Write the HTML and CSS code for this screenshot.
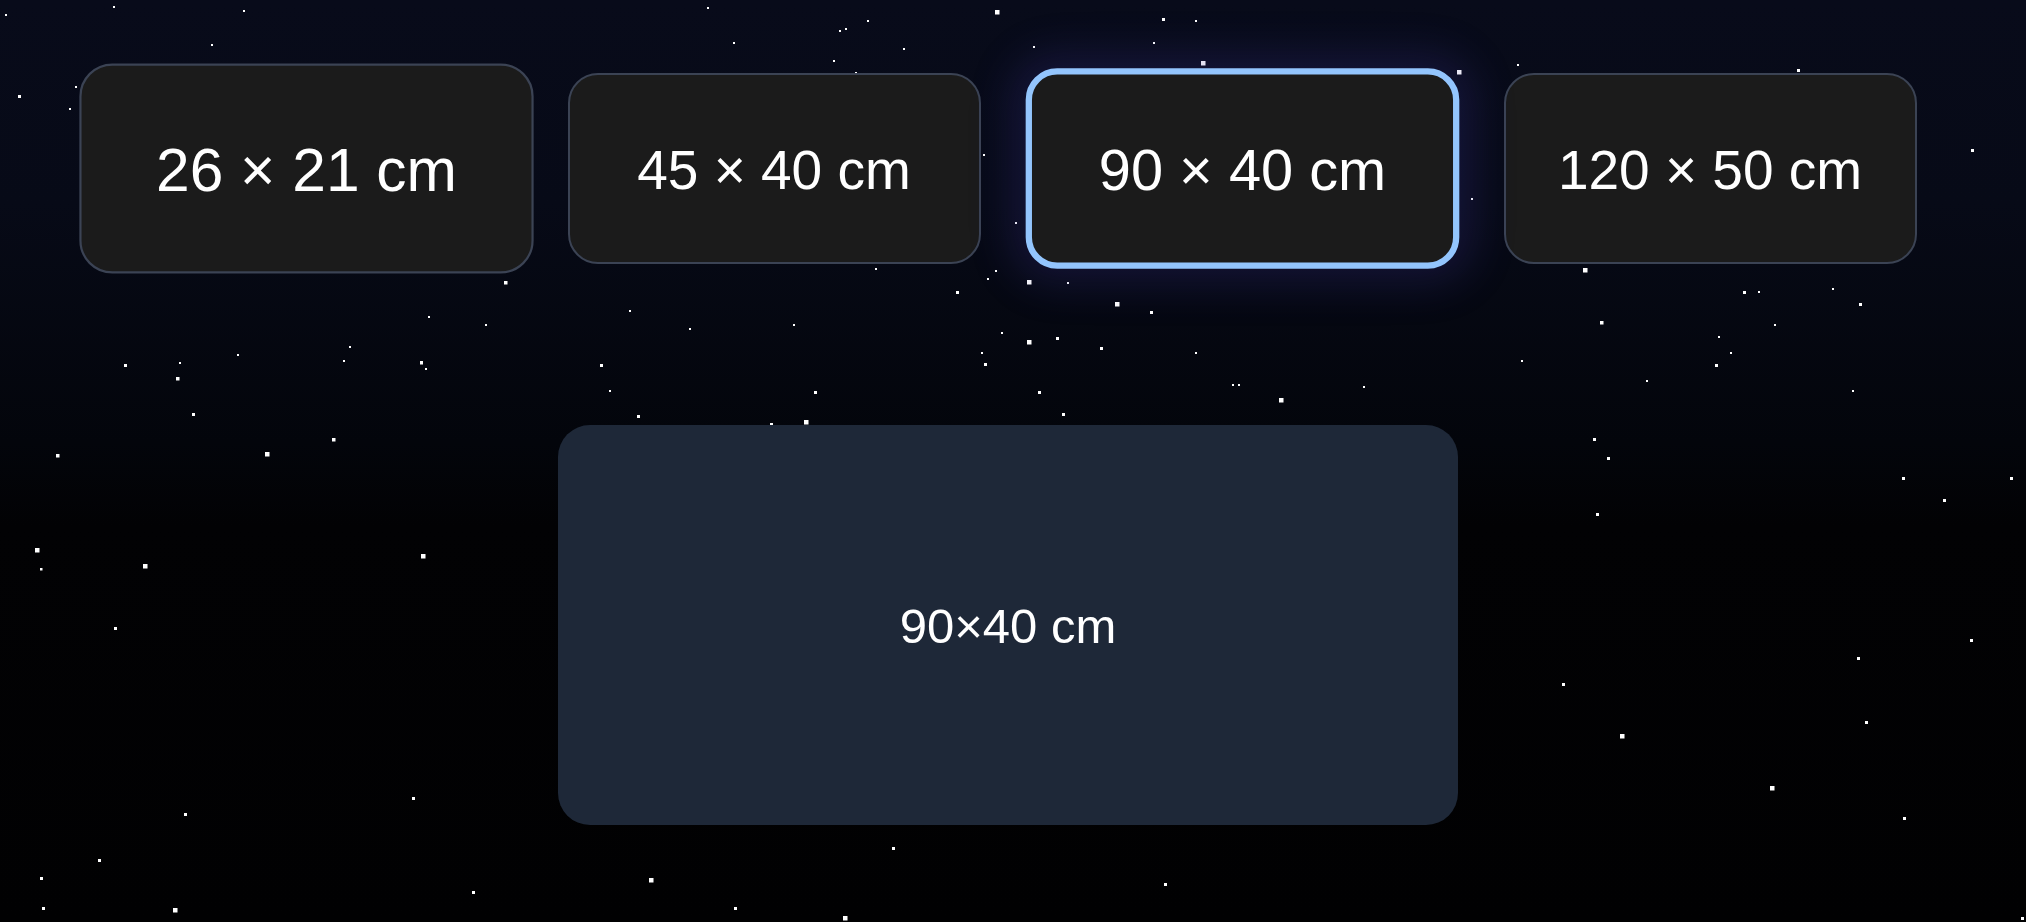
FILE: index.html
```html
<!DOCTYPE html>
<html lang="en">
<head>
<meta charset="utf-8">
<title>Size picker</title>
<link rel="stylesheet" href="styles.css">
</head>
<body>
<svg class="sky" width="2026" height="922" viewBox="0 0 2026 922" aria-hidden="true">
  <g fill="#ffffff">
    <rect x="5" y="14" width="2" height="2"/><rect x="113" y="6" width="2" height="2"/><rect x="243" y="10" width="2" height="2"/>
    <rect x="211" y="44" width="2" height="2"/><rect x="18" y="95" width="3" height="3"/><rect x="75" y="86" width="2" height="2"/>
    <rect x="69" y="108" width="2" height="2"/><rect x="504" y="281" width="3.5" height="3.5"/><rect x="428" y="316" width="2" height="2"/>
    <rect x="485" y="324" width="2" height="2"/><rect x="629" y="310" width="2" height="2"/><rect x="124" y="364" width="3" height="3"/>
    <rect x="179" y="362" width="2" height="2"/><rect x="176" y="377" width="3.5" height="3.5"/><rect x="237" y="354" width="2" height="2"/>
    <rect x="349" y="346" width="2" height="2"/><rect x="343" y="360" width="2" height="2"/><rect x="420" y="361" width="3" height="3.5"/>
    <rect x="425" y="368" width="2" height="2"/><rect x="600" y="364" width="3" height="3"/><rect x="609" y="390" width="2" height="2"/>
    <rect x="637" y="415" width="3" height="3"/><rect x="192" y="413" width="3" height="3"/><rect x="332" y="438" width="3.5" height="3.5"/>
    <rect x="56" y="454" width="3.5" height="3.5"/><rect x="265" y="452" width="4.5" height="4.5"/>

    <rect x="707" y="7" width="2" height="2"/><rect x="995" y="10" width="4.5" height="4.5"/><rect x="867" y="20" width="2" height="2"/>
    <rect x="839" y="30" width="2" height="2"/><rect x="845" y="28" width="2" height="2"/><rect x="733" y="42" width="2" height="2"/>
    <rect x="903" y="48" width="2" height="2"/><rect x="833" y="60" width="2" height="2"/><rect x="855" y="72" width="2" height="2"/>
    <rect x="1033" y="46" width="2" height="2"/><rect x="1162" y="18" width="3" height="3"/><rect x="1195" y="20" width="2" height="2"/>
    <rect x="1153" y="42" width="2" height="2"/><rect x="1201" y="61" width="4.5" height="4.5"/><rect x="983" y="154" width="2" height="2"/>
    <rect x="1015" y="222" width="2" height="2"/><rect x="875" y="268" width="2" height="2"/><rect x="995" y="270" width="2" height="2"/>
    <rect x="987" y="278" width="2" height="2"/><rect x="956" y="291" width="3" height="3"/><rect x="1027" y="280" width="4.5" height="4.5"/>
    <rect x="1067" y="282" width="2" height="2"/><rect x="1115" y="302" width="4.5" height="4.5"/><rect x="1150" y="311" width="3" height="3"/>
    <rect x="689" y="328" width="2" height="2"/><rect x="793" y="324" width="2" height="2"/><rect x="1001" y="332" width="2" height="2"/>
    <rect x="1027" y="340" width="4.5" height="4.5"/><rect x="1056" y="337" width="3" height="3"/><rect x="1100" y="347" width="3" height="3"/>
    <rect x="1195" y="352" width="2" height="2"/><rect x="981" y="352" width="2" height="2"/><rect x="984" y="363" width="3" height="3"/>
    <rect x="1232" y="384" width="2" height="2"/><rect x="1238" y="384" width="2" height="2"/><rect x="1279" y="398" width="4.5" height="4.5"/>
    <rect x="814" y="391" width="3" height="3"/><rect x="1038" y="391" width="3" height="3"/><rect x="1062" y="413" width="3" height="3"/>
    <rect x="770" y="423" width="3" height="3"/><rect x="804" y="420" width="4.5" height="4.5"/>

    <rect x="1457" y="70" width="4.5" height="4.5"/><rect x="1517" y="64" width="2" height="2"/><rect x="1797" y="69" width="3" height="3"/>
    <rect x="1971" y="149" width="3" height="3"/><rect x="1471" y="198" width="2" height="2"/><rect x="1583" y="268" width="4.5" height="4.5"/>
    <rect x="1743" y="291" width="3" height="3"/><rect x="1758" y="291" width="2" height="2"/><rect x="1832" y="288" width="2" height="2"/>
    <rect x="1859" y="303" width="3" height="3"/><rect x="1600" y="321" width="3.5" height="3.5"/><rect x="1774" y="324" width="2" height="2"/>
    <rect x="1718" y="336" width="2" height="2"/><rect x="1730" y="352" width="2" height="2"/><rect x="1715" y="364" width="3" height="3"/>
    <rect x="1521" y="360" width="2" height="2"/><rect x="1646" y="380" width="2" height="2"/><rect x="1363" y="386" width="2" height="2"/>
    <rect x="1852" y="390" width="2" height="2"/><rect x="1593" y="438" width="3" height="3"/><rect x="1607" y="457" width="3" height="3"/>

    <rect x="35" y="548" width="4.5" height="4.5"/><rect x="40" y="568" width="2.5" height="2.5"/><rect x="143" y="564" width="4.5" height="4.5"/>
    <rect x="114" y="627" width="3" height="3"/><rect x="421" y="554" width="4.5" height="4.5"/><rect x="184" y="813" width="3" height="3"/>
    <rect x="412" y="797" width="3" height="3"/><rect x="98" y="859" width="3" height="3"/><rect x="40" y="877" width="3" height="3"/>
    <rect x="42" y="907" width="3" height="3"/><rect x="173" y="908" width="4.5" height="4.5"/><rect x="472" y="891" width="3" height="3"/>
    <rect x="649" y="878" width="4.5" height="4.5"/>

    <rect x="892" y="847" width="3" height="3"/><rect x="1164" y="883" width="3" height="3"/><rect x="734" y="907" width="3" height="3"/>
    <rect x="843" y="916" width="4.5" height="4.5"/>

    <rect x="1902" y="477" width="3" height="3"/><rect x="2010" y="477" width="3" height="3"/><rect x="1943" y="499" width="3" height="3"/>
    <rect x="1596" y="513" width="3" height="3"/><rect x="1970" y="639" width="3" height="3"/><rect x="1857" y="657" width="3" height="3"/>
    <rect x="1562" y="683" width="3" height="3"/><rect x="1865" y="721" width="3" height="3"/><rect x="1620" y="734" width="4.5" height="4.5"/>
    <rect x="1770" y="786" width="4.5" height="4.5"/><rect x="1903" y="817" width="3" height="3"/><rect x="2021" y="917" width="3" height="3"/>
  </g>
</svg>

<main class="stage">
  <div class="options">
    <button class="option is-hover" type="button">26 × 21 cm</button>
    <button class="option" type="button">45 × 40 cm</button>
    <button class="option is-selected" type="button">90 × 40 cm</button>
    <button class="option" type="button">120 × 50 cm</button>
  </div>
  <div class="preview">90×40 cm</div>
</main>
</body>
</html>
```

FILE: styles.css
```css
* {
  box-sizing: border-box;
}

html,
body {
  margin: 0;
  height: 100%;
}

body {
  position: relative;
  overflow: hidden;
  font-family: "Liberation Sans", Arial, sans-serif;
  color: #ffffff;
  background: linear-gradient(to bottom, #080b1a 0%, #070a17 22%, #03050b 48%, #020204 57%, #010102 100%);
}

.sky {
  position: absolute;
  left: 0;
  top: 0;
  z-index: 0;
}

.stage {
  position: relative;
  z-index: 1;
  display: flex;
  flex-direction: column;
  align-items: center;
  padding: 73px 10px 0 0;
}

.options {
  display: flex;
  gap: 55px;
}

.option {
  width: 413px;
  height: 191px;
  display: flex;
  align-items: center;
  justify-content: center;
  background: #1b1b1b;
  border: 2.5px solid #3b4354;
  border-radius: 30px;
  color: #ffffff;
  font-family: "Liberation Sans", Arial, sans-serif;
  font-size: 55px;
  font-weight: 400;
  padding: 3px 0 0;
  cursor: pointer;
}

.option.is-hover {
  transform: scale(1.1);
}

.option.is-selected {
  transform: scale(1.05);
  border: 6px solid #93c5fd;
  box-shadow: 0 0 40px 14px rgba(70, 60, 170, 0.22);
}

.preview {
  margin-top: 161px;
  width: 900px;
  height: 400px;
  display: flex;
  align-items: center;
  justify-content: center;
  padding-top: 2px;
  background: #1e2838;
  border-radius: 32px;
  font-size: 49px;
  color: #ffffff;
}
```
